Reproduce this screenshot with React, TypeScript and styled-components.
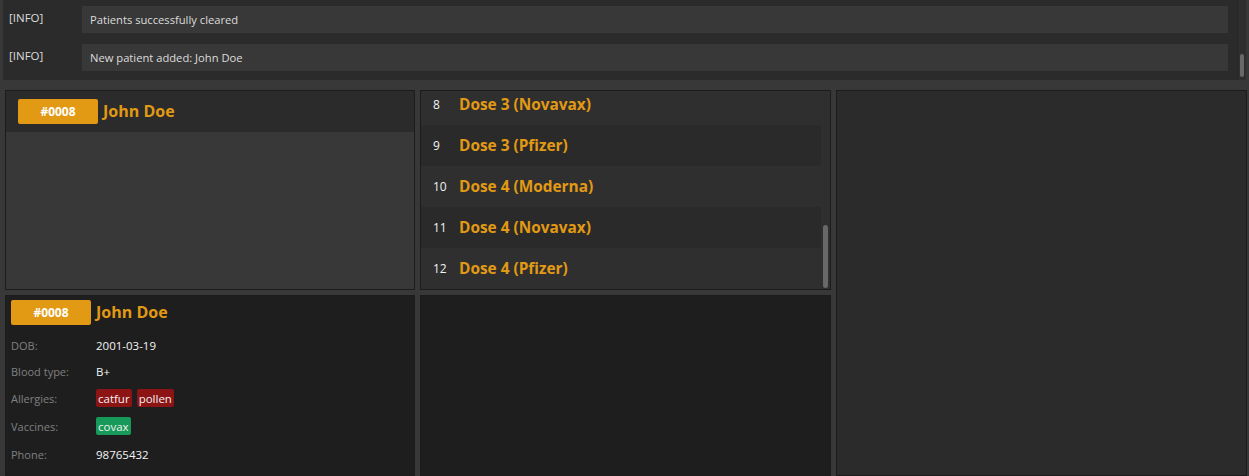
import React, { useLayoutEffect, useRef } from 'react';
import styled, { createGlobalStyle } from 'styled-components';

const GlobalStyle = createGlobalStyle`
  *, *::before, *::after {
    box-sizing: border-box;
  }
  html, body {
    margin: 0;
    padding: 0;
    background: #383838;
  }
  body {
    font-family: 'Open Sans', 'Liberation Sans', sans-serif;
    font-size: 12px;
    color: #e0e0e0;
  }
`;

const ORANGE = '#e29a14';

const Page = styled.div`
  width: 1249px;
  height: 476px;
  overflow: hidden;
  background: #383838;
  display: flex;
  flex-direction: column;
`;

/* ---------- result log ---------- */

const LogPanel = styled.div`
  margin: 0 3px;
  height: 80px;
  flex: none;
  background: #2b2b2b;
  display: flex;
`;

const LogList = styled.div`
  flex: 1;
  display: flex;
  flex-direction: column;
  gap: 11px;
  padding: 6px 9px 0 6px;
`;

const LogRow = styled.div`
  display: flex;
`;

const LogLevel = styled.div`
  width: 73px;
  padding: 4px 0 0 0;
  color: #dcdcdc;
  font-size: 11.5px;
`;

const LogMessage = styled.div`
  flex: 1;
  height: 27px;
  background: #383838;
  display: flex;
  align-items: center;
  padding-left: 8px;
  color: #dcdcdc;
  font-size: 11.2px;
`;

const ScrollTrack = styled.div<{ $top: number; $len: number }>`
  width: 9px;
  flex: none;
  background: #2e2e2e;
  border-left: 1px solid #262626;
  position: relative;
  &::after {
    content: '';
    position: absolute;
    left: 2px;
    right: 2px;
    top: ${(p) => p.$top}px;
    height: ${(p) => p.$len}px;
    border-radius: 3px;
    background: #686868;
  }
`;

/* ---------- panels ---------- */

const Grid = styled.div`
  flex: 1;
  display: grid;
  grid-template-columns: 410px 411px 411px;
  grid-template-rows: 200px 1fr;
  column-gap: 5px;
  row-gap: 5px;
  padding: 10px 3px 0 5px;
  min-height: 0;
`;

const Panel = styled.div<{ $bg: string }>`
  background: ${(p) => p.$bg};
  border: 1px solid #1c1c1c;
  min-height: 0;
  overflow: hidden;
`;

const SidePanel = styled(Panel)`
  grid-column: 3;
  grid-row: 1 / span 2;
`;

const Badge = styled.div`
  width: 80px;
  height: 25px;
  flex: none;
  border-radius: 2px;
  background: ${ORANGE};
  color: #fff;
  font-weight: 700;
  font-size: 12px;
  display: flex;
  align-items: center;
  justify-content: center;
`;

const Name = styled.div`
  color: ${ORANGE};
  font-weight: 700;
  font-size: 16px;
  line-height: 20px;
  margin-top: -2px;
`;

const HeaderBar = styled.div`
  height: 41px;
  background: #2b2b2b;
  display: flex;
  align-items: center;
  gap: 5px;
  padding-left: 12px;
`;

const PatientPanel = styled(Panel)`
  display: flex;
  flex-direction: column;
`;

/* ---------- vaccination list ---------- */

const ListPanel = styled(Panel)`
  display: flex;
`;

const ListViewport = styled.div`
  flex: 1;
  overflow: hidden;
`;

const DoseRow = styled.div<{ $alt: boolean }>`
  height: 41px;
  display: flex;
  align-items: center;
  padding-bottom: 1px;
  background: ${(p) => (p.$alt ? '#2f2f2f' : '#2a2a2a')};
`;

const DoseIndex = styled.div`
  width: 38px;
  padding-left: 12px;
  color: #f2f2f2;
  font-size: 12px;
`;

const DoseName = styled.div`
  color: ${ORANGE};
  font-weight: 700;
  font-size: 15.4px;
`;

const ListTrack = styled(ScrollTrack)`
  background: #2f2f2f;
  border-left: none;
`;

/* ---------- detail card ---------- */

const Detail = styled.div`
  padding: 4px 5px;
  display: flex;
  flex-direction: column;
`;

const DetailHead = styled.div`
  display: flex;
  align-items: center;
  gap: 5px;
  margin-bottom: 7px;
`;

const Field = styled.div<{ $h: number }>`
  display: flex;
  align-items: center;
  height: ${(p) => p.$h}px;
`;

const FieldLabel = styled.div`
  width: 85px;
  color: #808080;
  font-size: 11px;
`;

const FieldValue = styled.div`
  color: #f4f4f4;
  font-size: 11.5px;
  display: flex;
  gap: 5px;
`;

const Tag = styled.span<{ $kind: 'allergy' | 'vaccine' }>`
  display: inline-flex;
  align-items: center;
  height: 18px;
  padding: 0 2px;
  border-radius: 2px;
  background: ${(p) => (p.$kind === 'allergy' ? '#8c1414' : '#17995a')};
  color: #f2f2f2;
  font-size: 11.5px;
`;

// the list is scrolled to its end: entries 8-12 are the ones in view
const doses = [
  { id: 8, name: 'Dose 3 (Novavax)' },
  { id: 9, name: 'Dose 3 (Pfizer)' },
  { id: 10, name: 'Dose 4 (Moderna)' },
  { id: 11, name: 'Dose 4 (Novavax)' },
  { id: 12, name: 'Dose 4 (Pfizer)' },
];

const logs = ['Patients successfully cleared', 'New patient added: John Doe'];

export default function App() {
  const listRef = useRef<HTMLDivElement>(null);

  useLayoutEffect(() => {
    if (listRef.current) listRef.current.scrollTop = listRef.current.scrollHeight;
  }, []);

  return (
    <Page>
      <GlobalStyle />
      <LogPanel>
        <LogList>
          {logs.map((msg) => (
            <LogRow key={msg}>
              <LogLevel>[INFO]</LogLevel>
              <LogMessage>{msg}</LogMessage>
            </LogRow>
          ))}
        </LogList>
        <ScrollTrack $top={54} $len={23} />
      </LogPanel>

      <Grid>
        <PatientPanel $bg="#383838">
          <HeaderBar>
            <Badge>#0008</Badge>
            <Name>John Doe</Name>
          </HeaderBar>
        </PatientPanel>

        <ListPanel $bg="#2a2a2a">
          <ListViewport ref={listRef}>
            {doses.map((d) => (
              <DoseRow key={d.id} $alt={d.id % 2 === 0}>
                <DoseIndex>{d.id}</DoseIndex>
                <DoseName>{d.name}</DoseName>
              </DoseRow>
            ))}
          </ListViewport>
          <ListTrack $top={134} $len={63} />
        </ListPanel>

        <SidePanel $bg="#2b2b2b" />

        <Panel $bg="#1e1e1e">
          <Detail>
            <DetailHead>
              <Badge>#0008</Badge>
              <Name>John Doe</Name>
            </DetailHead>
            <Field $h={26}>
              <FieldLabel>DOB:</FieldLabel>
              <FieldValue>2001-03-19</FieldValue>
            </Field>
            <Field $h={26}>
              <FieldLabel>Blood type:</FieldLabel>
              <FieldValue>B+</FieldValue>
            </Field>
            <Field $h={28}>
              <FieldLabel>Allergies:</FieldLabel>
              <FieldValue>
                <Tag $kind="allergy">catfur</Tag>
                <Tag $kind="allergy">pollen</Tag>
              </FieldValue>
            </Field>
            <Field $h={28}>
              <FieldLabel>Vaccines:</FieldLabel>
              <FieldValue>
                <Tag $kind="vaccine">covax</Tag>
              </FieldValue>
            </Field>
            <Field $h={28}>
              <FieldLabel>Phone:</FieldLabel>
              <FieldValue>98765432</FieldValue>
            </Field>
          </Detail>
        </Panel>

        <Panel $bg="#1e1e1e" />
      </Grid>
    </Page>
  );
}
